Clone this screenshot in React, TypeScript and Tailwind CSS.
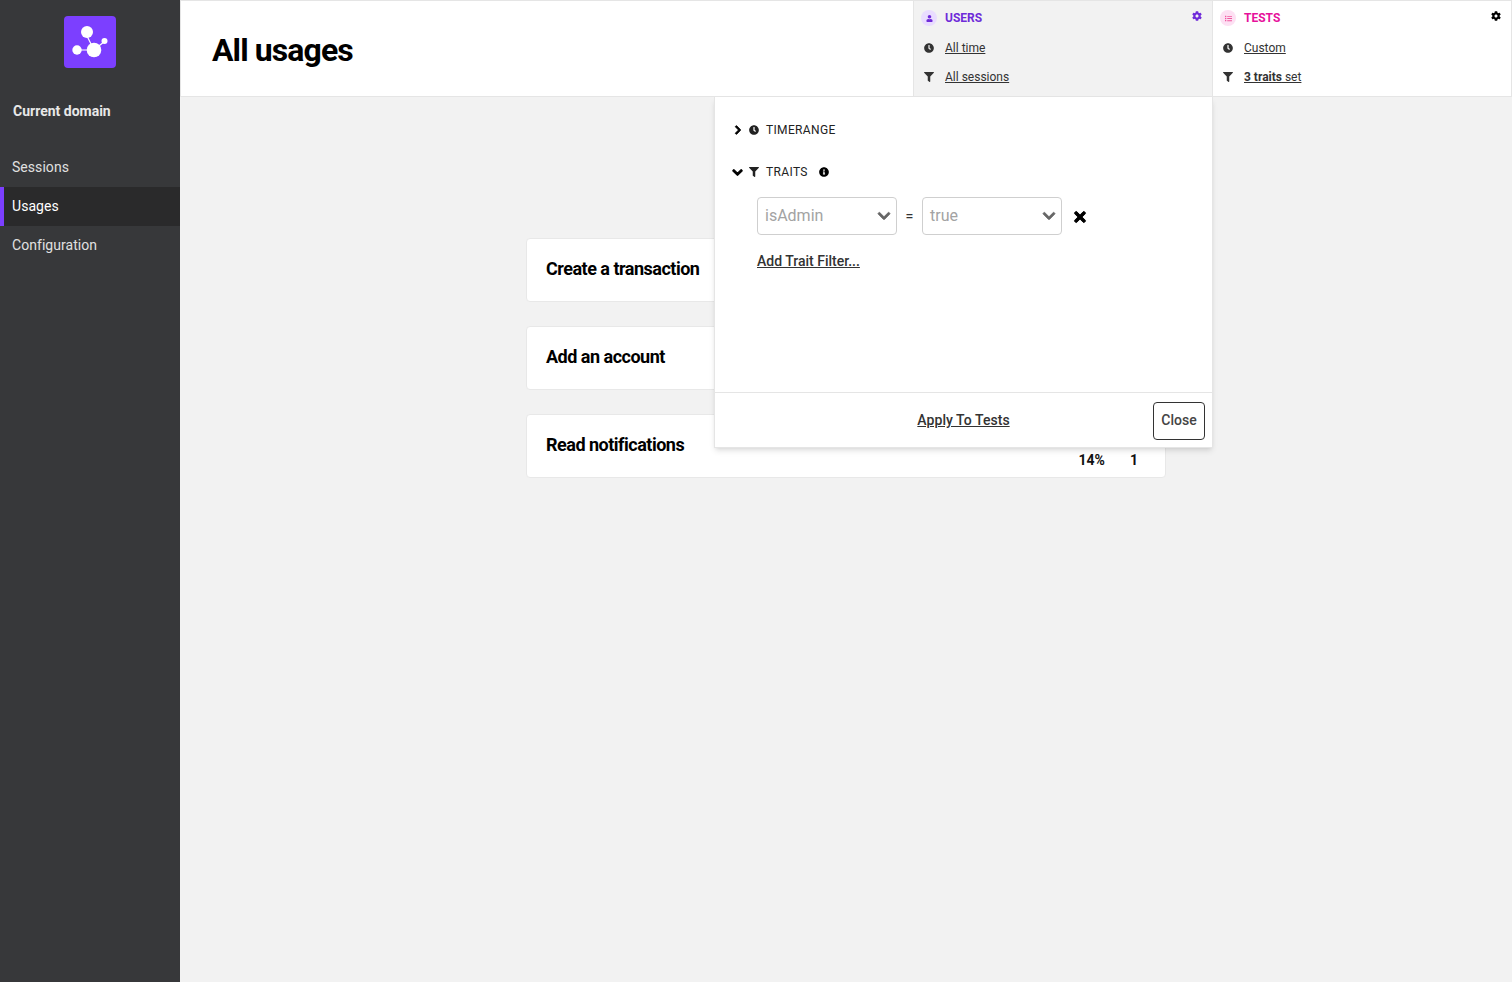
import { FaChevronDown, FaChevronRight, FaClock, FaCog, FaFilter, FaInfoCircle, FaList, FaTimes, FaUser } from "react-icons/fa";

const Logo = () => (
  <div className="w-[52px] h-[52px] rounded-[4px] bg-[#7c3fff] flex items-center justify-center">
    <svg width="52" height="52" viewBox="0 0 52 52" fill="white" stroke="white">
      <path d="M23 20 L30 34 M13 34 H30 M30 34 L41 25" strokeWidth="1.2" fill="none" />
      <circle cx="23" cy="16" r="6" stroke="none" />
      <circle cx="30" cy="34" r="7.3" stroke="none" />
      <circle cx="13" cy="34" r="4.7" stroke="none" />
      <circle cx="40.5" cy="25" r="3" stroke="none" />
    </svg>
  </div>
);

const navItems = ["Sessions", "Usages", "Configuration"];

const Sidebar = () => (
  <div className="w-[180px] shrink-0 bg-[#37383a] flex flex-col">
    <div className="flex justify-center pt-4">
      <Logo />
    </div>
    <div className="pl-[13px] mt-[33px] text-sm font-bold leading-5 text-[#e8e8e8]">Current domain</div>
    <div className="mt-[27px] flex flex-col">
      {navItems.map((item) => (
        <div
          key={item}
          className={
            item === "Usages"
              ? "h-[39px] flex items-center pb-[2px] pl-2 text-sm tracking-[0.05px] text-white bg-[#2a2a2b] border-l-4 border-[#7c3fff]"
              : "h-[39px] flex items-center pb-[2px] pl-3 text-sm tracking-[0.05px] text-[#e0e0e0]"
          }
        >
          {item}
        </div>
      ))}
    </div>
  </div>
);

const ScopePanel = ({
  title,
  color,
  circle,
  box,
  cog,
  icon,
  time,
  filter,
}: {
  title: string;
  color: string;
  circle: string;
  box: string;
  cog: string;
  icon: React.ReactNode;
  time: string;
  filter: React.ReactNode;
}) => (
  <div className={`h-full border-l border-[#e5e5e5] relative ${box}`}>
    <div className="flex items-center h-4 mt-[9px] pl-[7px]">
      <div className={`w-4 h-4 rounded-full flex items-center justify-center ${circle}`}>{icon}</div>
      <span className={`ml-2 text-xs font-bold ${color}`}>{title}</span>
    </div>
    <div className={`absolute top-[10px] right-[10px] text-[10px] ${cog}`}>
      <FaCog />
    </div>
    <div className="flex items-center mt-[14px] pl-[10px] h-4 text-xs text-[#333]">
      <FaClock className="w-[10px] h-[10px]" />
      <span className="ml-[11px] underline">{time}</span>
    </div>
    <div className="flex items-center mt-[13px] pl-[10px] h-4 text-xs text-[#333]">
      <FaFilter className="w-[10px] h-[10px]" />
      <span className="ml-[11px] underline">{filter}</span>
    </div>
  </div>
);

const Header = () => (
  <div className="h-[97px] flex bg-white border-t border-b border-l border-[#e5e5e5]">
    <div className="flex-1 pl-[31px] flex items-center">
      <h1 className="text-[32px] font-bold tracking-[-0.9px] text-black leading-none mt-[3px]">All usages</h1>
    </div>
    <ScopePanel
      title="USERS"
      color="text-[#6f2bd9]"
      circle="bg-[#e9dcff]"
      box="w-[299px] bg-[#f2f2f2]"
      cog="text-[#6f2bd9]"
      icon={<FaUser className="w-[7px] h-[7px] text-[#6f2bd9]" />}
      time="All time"
      filter="All sessions"
    />
    <ScopePanel
      title="TESTS"
      color="text-[#e6129b]"
      circle="bg-[#fde0f3]"
      box="w-[300px] bg-white border-r"
      cog="text-black"
      icon={<FaList className="w-[7px] h-[7px] text-[#f0569f]" />}
      time="Custom"
      filter={
        <>
          <b>3 traits</b> set
        </>
      }
    />
  </div>
);

const UsageCard = ({ name, percent, count }: { name: string; percent?: string; count?: string }) => (
  <div className="w-[640px] h-16 bg-white border border-[#e8e8e8] rounded-[4px] relative flex items-center pb-[2px] pl-[19px]">
    <span className="text-lg font-bold tracking-[-0.5px] text-black">{name}</span>
    {percent && (
      <div className="absolute right-[27px] top-[37px] flex text-sm font-bold text-[#111] leading-4">
        <div className="w-[27px] relative text-right">
          <div className="absolute -top-[24px] right-[5px] w-4 h-4 rounded-full bg-[#e9dcff]" />
          {percent}
        </div>
        <div className="ml-[25px] relative">
          <div className="absolute -top-[24px] -left-[4px] w-4 h-4 rounded-full bg-[#fde0f3]" />
          {count}
        </div>
      </div>
    )}
  </div>
);

const SelectBox = ({ value }: { value: string }) => (
  <div className="w-[140px] h-[38px] border border-[#cfcfcf] rounded-[4px] bg-white flex items-center justify-between pl-[7px] pr-[5px]">
    <span className="text-base text-[#a3a3a3]">{value}</span>
    <FaChevronDown className="w-[14px] h-[14px] text-[#666] [stroke-width:30px]" />
  </div>
);

const Popover = () => (
  <div className="absolute left-[534px] top-[97px] w-[499px] h-[351px] bg-white border-r border-b border-l border-[#e5e5e5] shadow-md flex flex-col">
    <div className="flex-1 pl-[18px]">
      <div className="flex items-center mt-6 h-[18px] text-xs tracking-[0.35px] text-[#222]">
        <FaChevronRight className="w-[10px] h-[10px] text-black [stroke-width:50px]" />
        <FaClock className="w-[10px] h-[10px] ml-[6px]" />
        <span className="ml-[7px]">TIMERANGE</span>
      </div>
      <div className="flex items-center mt-6 h-[18px] text-xs tracking-[0.35px] text-[#222]">
        <FaChevronDown className="w-[11px] h-[11px] -ml-[1px] text-black [stroke-width:50px]" />
        <FaFilter className="w-[10px] h-[10px] ml-[6px]" />
        <span className="ml-[7px]">TRAITS</span>
        <FaInfoCircle className="w-[10px] h-[10px] ml-[11px] text-black" />
      </div>
      <div className="flex items-center mt-[16px] ml-[24px]">
        <SelectBox value="isAdmin" />
        <span className="w-[25px] text-center text-sm font-medium text-[#333]">=</span>
        <SelectBox value="true" />
        <FaTimes className="w-4 h-4 ml-[10px] mt-[2px] text-black [stroke-width:30px]" />
      </div>
      <div className="ml-[24px] mt-[16px] text-sm font-medium text-[#333] underline leading-5">Add Trait Filter...</div>
    </div>
    <div className="h-[55px] border-t border-[#e5e5e5] relative flex items-center justify-center">
      <span className="text-sm font-medium tracking-[0.05px] text-[#333] underline">Apply To Tests</span>
      <button className="absolute right-[7px] top-[9px] w-[52px] h-[38px] pb-[2px] border border-[#333] rounded-[4px] text-sm font-medium text-[#444] bg-white">
        Close
      </button>
    </div>
  </div>
);

export default function App() {
  return (
    <div className="flex h-[982px] w-[1512px] overflow-hidden bg-[#f2f2f2] font-['Roboto',sans-serif]">
      <Sidebar />
      <div className="flex-1 relative">
        <Header />
        <div className="flex flex-col items-center gap-6 pt-[141px]">
          <UsageCard name="Create a transaction" />
          <UsageCard name="Add an account" />
          <UsageCard name="Read notifications" percent="14%" count="1" />
        </div>
        <Popover />
      </div>
    </div>
  );
}
